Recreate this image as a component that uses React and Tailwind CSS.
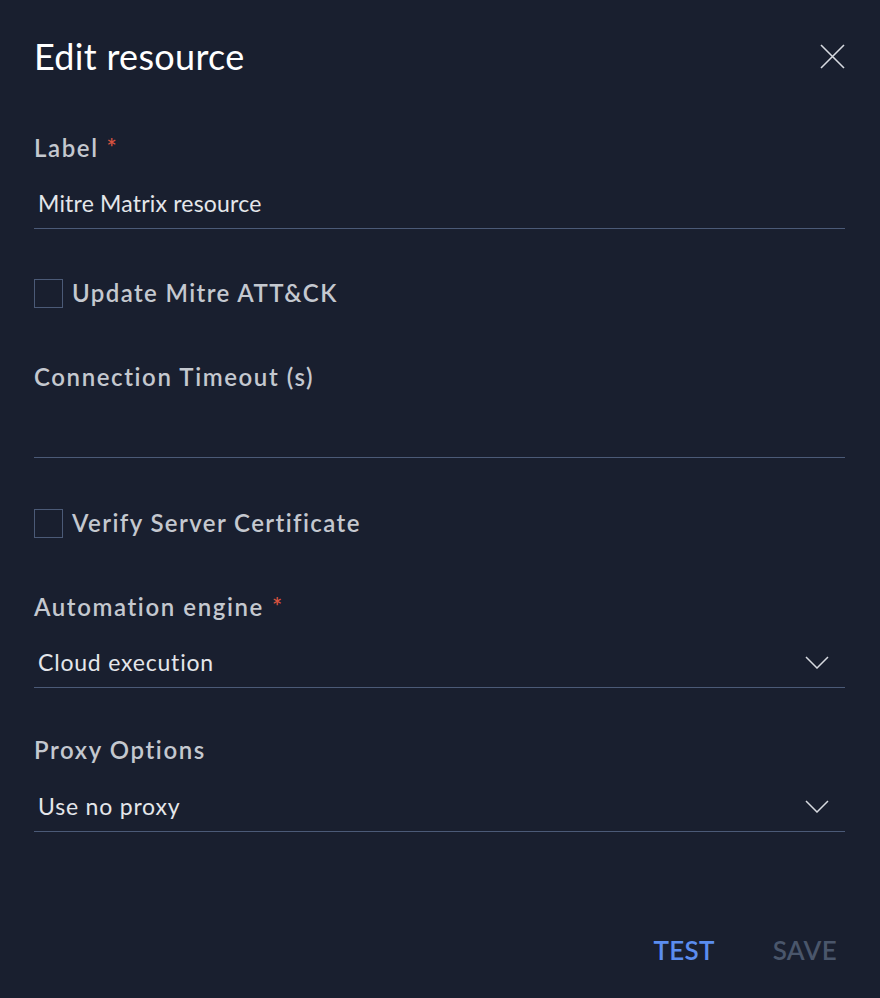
const font = { fontFamily: 'Lato, "Open Sans", sans-serif' };

function FieldLabel({ children, required, className = '' }) {
  return (
    <div className={`h-[30px] flex items-center text-[24px] font-semibold tracking-[1.6px] text-[#c4c8cf] ${className}`}>
      {children}
      {required && <span className="ml-2 text-[#d9533f]">*</span>}
    </div>
  );
}

function TextInput({ value, className = '' }) {
  return (
    <div className={`h-[51px] flex items-center pl-1 border-b border-[#4b5a77] text-[23px] tracking-[0.2px] text-[#e4e6ea] ${className}`}>
      {value}
    </div>
  );
}

function SelectInput({ value, className = '' }) {
  return (
    <div className={`h-[51px] flex items-center justify-between pl-1 pr-4 border-b border-[#4b5a77] text-[23px] tracking-[0.8px] text-[#e4e6ea] ${className}`}>
      <span>{value}</span>
      <svg width="24" height="13" viewBox="0 0 24 13" fill="none" stroke="#d7dae0" strokeWidth="1.5">
        <path d="M1 1l11 11L23 1" />
      </svg>
    </div>
  );
}

function Checkbox({ label, className = '' }) {
  return (
    <div className={`h-[30px] flex items-center gap-[9px] ${className}`}>
      <div className="w-[29px] h-[29px] border border-[#4b5a77]" />
      <span className="text-[24px] font-semibold tracking-[1.4px] text-[#c4c8cf]">{label}</span>
    </div>
  );
}

export default function App() {
  return (
    <div className="w-[880px] min-h-[998px] bg-[#191f2f] pl-[34px] pr-[35px] pt-[32px]" style={font}>
      <div className="h-[48px] flex items-center justify-between">
        <h1 className="text-[36px] font-normal text-white tracking-[0.3px]">Edit resource</h1>
        <svg width="25" height="25" viewBox="0 0 25 25" stroke="#d7dae0" strokeWidth="1.6">
          <path d="M1 1l23 23M24 1L1 24" />
        </svg>
      </div>

      <FieldLabel required className="mt-[53px]">Label</FieldLabel>
      <TextInput value="Mitre Matrix resource" className="mt-[15px]" />

      <Checkbox label="Update Mitre ATT&CK" className="mt-[49px]" />

      <FieldLabel className="mt-[54px]">Connection Timeout (s)</FieldLabel>
      <TextInput value="" className="mt-[15px]" />

      <Checkbox label="Verify Server Certificate" className="mt-[50px]" />

      <FieldLabel required className="mt-[54px]">Automation engine</FieldLabel>
      <SelectInput value="Cloud execution" className="mt-[15px]" />

      <FieldLabel className="mt-[47px]">Proxy Options</FieldLabel>
      <SelectInput value="Use no proxy" className="mt-[16px]" />

      <div className="mt-[103px] h-[30px] flex items-center justify-end gap-[58px] pr-[8px] text-[26px] font-semibold tracking-[0.3px]">
        <span className="text-[#5b8def]">TEST</span>
        <span className="text-[#4a566b]">SAVE</span>
      </div>
    </div>
  );
}
